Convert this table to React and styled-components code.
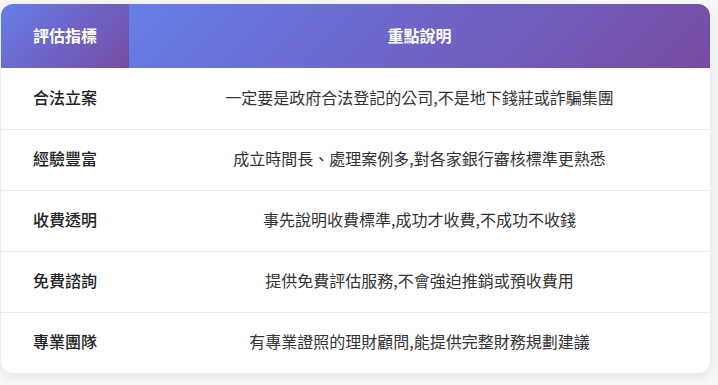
import React from 'react';
import styled, { createGlobalStyle } from 'styled-components';

const GlobalStyle = createGlobalStyle`
	html, body {
		margin: 0;
		padding: 0;
		background: #f7f7f8;
	}
	body {
		font-family: "Noto Sans CJK TC", "Noto Sans", sans-serif;
		color: #333;
	}
`;

const Wrapper = styled.div`
	padding: 4px 8px 10px 1px;
`;

const Card = styled.div`
	width: 709px;
	background: #ffffff;
	border-radius: 12px;
	overflow: hidden;
	box-shadow: 0 4px 12px rgba(0, 0, 0, 0.08);
`;

const Table = styled.table`
	width: 100%;
	border-collapse: collapse;
	table-layout: fixed;
`;

const HeadCell = styled.th`
	width: ${(props) => props.width || 'auto'};
	height: 64px;
	padding: 0 16px 3px;
	box-sizing: border-box;
	background: linear-gradient(135deg, #667eea 0%, #764ba2 100%);
	color: #ffffff;
	font-size: 16px;
	font-weight: 600;
	text-align: center;
`;

const Row = styled.tr`
	&:not(:last-child) {
		border-bottom: 1px solid #ebebeb;
	}
`;

const Cell = styled.td`
	height: 61px;
	padding: 0 16px 3px;
	box-sizing: border-box;
	font-size: 16px;
	text-align: center;
	font-weight: ${(props) => (props.strong ? 500 : 400)};
	color: ${(props) => (props.strong ? '#222' : '#333')};
`;

const rows = [
	['合法立案', '一定要是政府合法登記的公司,不是地下錢莊或詐騙集團'],
	['經驗豐富', '成立時間長、處理案例多,對各家銀行審核標準更熟悉'],
	['收費透明', '事先說明收費標準,成功才收費,不成功不收錢'],
	['免費諮詢', '提供免費評估服務,不會強迫推銷或預收費用'],
	['專業團隊', '有專業證照的理財顧問,能提供完整財務規劃建議'],
];

function App() {
	return (
		<Wrapper>
			<GlobalStyle />
			<Card>
				<Table>
					<thead>
						<tr>
							<HeadCell width='128px'>評估指標</HeadCell>
							<HeadCell>重點說明</HeadCell>
						</tr>
					</thead>
					<tbody>
						{rows.map((item) => (
							<Row key={item[0]}>
								<Cell strong>{item[0]}</Cell>
								<Cell>{item[1]}</Cell>
							</Row>
						))}
					</tbody>
				</Table>
			</Card>
		</Wrapper>
	);
}

export default App;
